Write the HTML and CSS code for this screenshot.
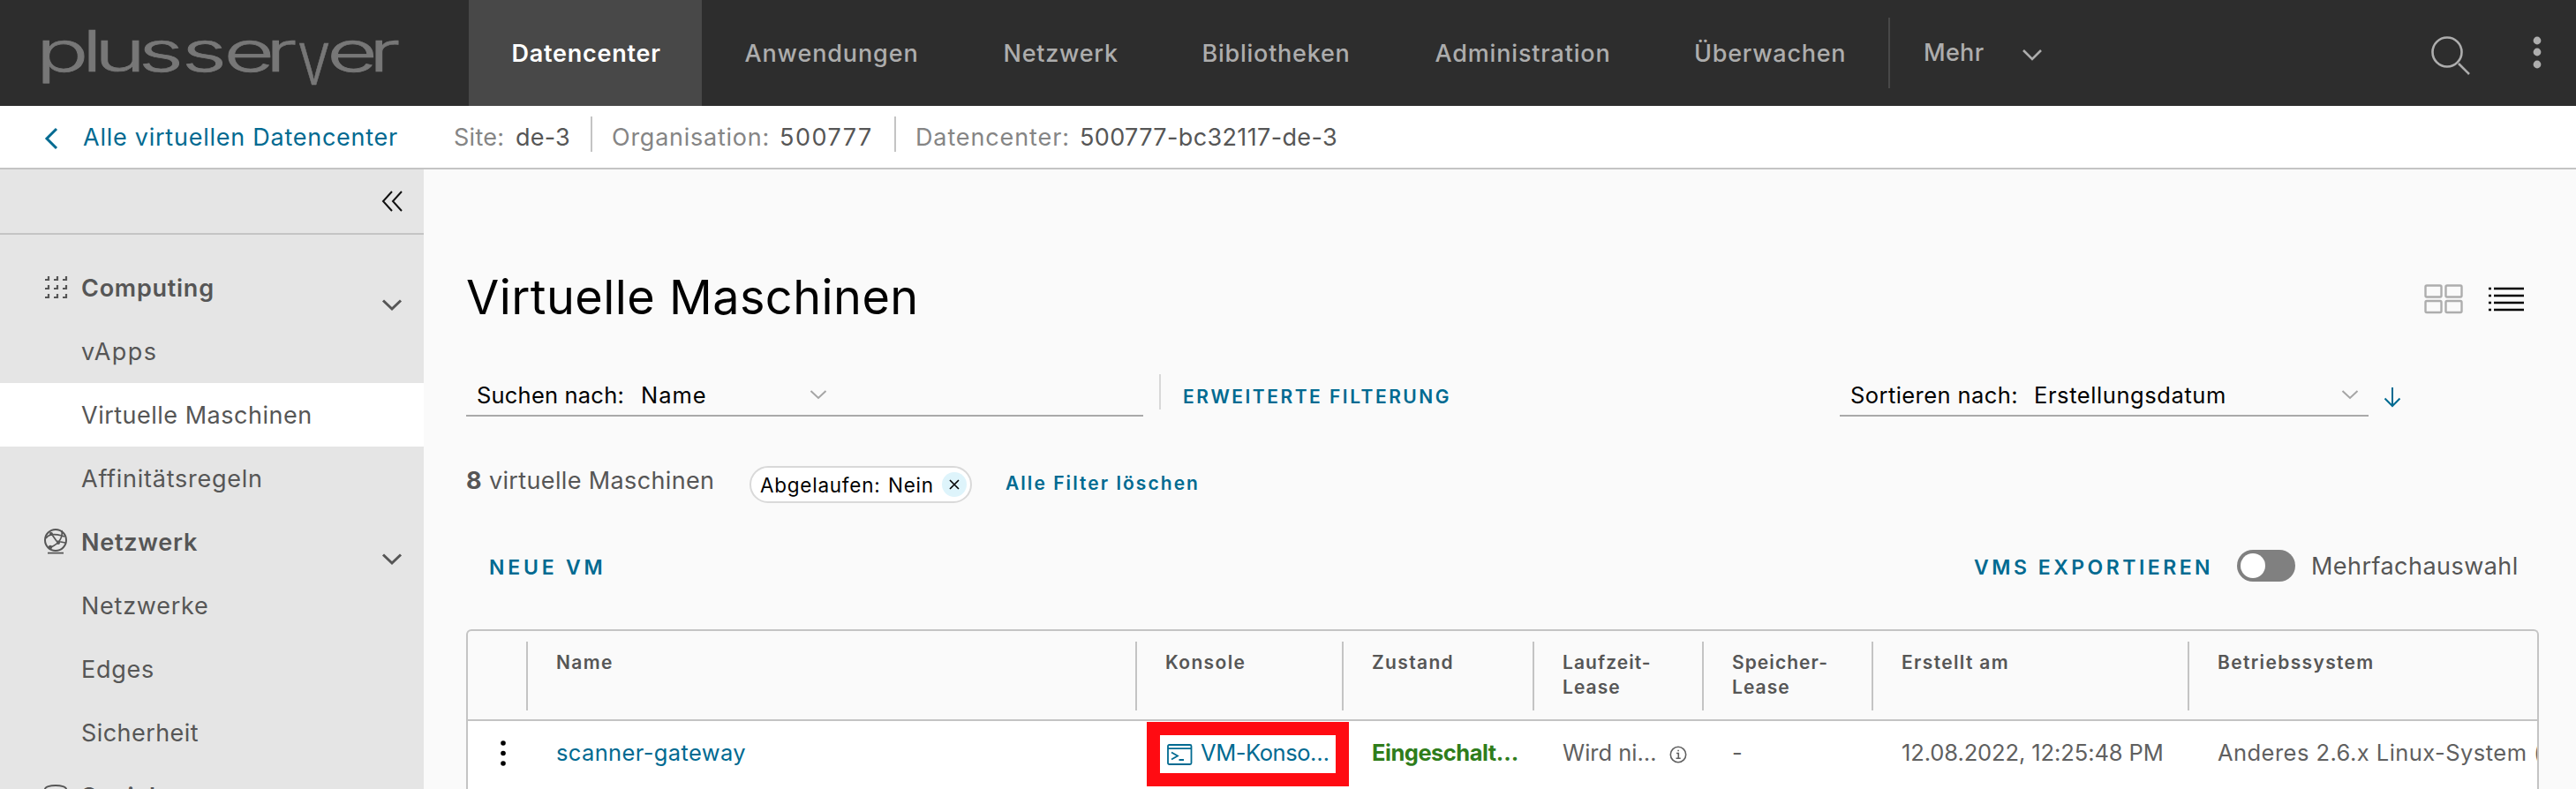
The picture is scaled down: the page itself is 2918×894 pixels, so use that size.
FILE: index.html
```html
<!DOCTYPE html>
<html lang="de">
<head>
<meta charset="utf-8">
<title>Virtuelle Maschinen</title>
<link rel="stylesheet" href="styles.css">
</head>
<body>
<header class="topbar">
  <svg class="logo" width="531" height="120" viewBox="0 0 531 120" aria-label="plusserver">
    <g class="logo-wide" transform="scale(1.55 1)">
      <text y="81" x="26.3 59.8 68.9 101.2 132.8 163.500 194">plusser</text>
      <text y="81" x="238.900 269.500">er</text>
    </g>
    <g transform="scale(.78 1)"><text class="logo-v" y="96" x="432">v</text></g>
  </svg>
  <nav class="nav">
    <a class="nav-item nav-active w-dc">Datencenter</a>
    <a class="nav-item w-app">Anwendungen</a>
    <a class="nav-item w-net">Netzwerk</a>
    <a class="nav-item w-lib">Bibliotheken</a>
    <a class="nav-item w-adm">Administration</a>
    <a class="nav-item w-mon">Überwachen</a>
    <a class="nav-more">Mehr
      <svg width="24" height="14" viewBox="0 0 24 14"><path d="M2 2l10 10L22 2"/></svg>
    </a>
  </nav>
  <div class="top-actions">
    <svg class="search" width="46" height="46" viewBox="0 0 46 46"><circle cx="19" cy="19" r="16.5"/><path d="M32 32l12 12"/></svg>
    <svg class="dots" width="12" height="40" viewBox="0 0 12 40"><circle cx="6" cy="6" r="4.4"/><circle cx="6" cy="19" r="4.4"/><circle cx="6" cy="33" r="4.4"/></svg>
  </div>
</header>

<div class="crumbs">
  <svg class="back" width="16" height="26" viewBox="0 0 16 26"><path d="M14 2L3 13l11 11"/></svg>
  <a class="crumb-link">Alle virtuellen Datencenter</a>
  <div class="crumb c-site"><span class="k k-site">Site:</span><span class="v v-site">de-3</span></div>
  <div class="crumb c-org"><span class="k k-org">Organisation:</span><span class="v v-org">500777</span></div>
  <div class="crumb c-dc"><span class="k k-dc">Datencenter:</span><span class="v v-dc">500777-bc32117-de-3</span></div>
</div>

<div class="body">
  <aside class="side">
    <div class="side-head">
      <svg width="24" height="24" viewBox="0 0 24 24"><path d="M12 1L2 12l10 11M23 1L13 12l10 11"/></svg>
    </div>
    <div class="side-list">
      <div class="group">
        <svg class="gicon" width="28" height="32" viewBox="0 0 28 32"><path d="M1 7h4V3M11 7h4V3M21 7h4V3M1 17h4v-4M11 17h4v-4M21 17h4v-4M1 27h4v-4M11 27h4v-4M21 27h4v-4" stroke-width="2.2"/></svg>
        <span>Computing</span>
        <svg class="chev" width="24" height="15" viewBox="0 0 24 15"><path d="M2 2.500l10 9.500L22 2.500"/></svg>
      </div>
      <a class="item i-vapps">vApps</a>
      <a class="item sel">Virtuelle Maschinen</a>
      <a class="item i-aff">Affinitätsregeln</a>
      <div class="group">
        <svg class="gicon" width="28" height="32" viewBox="0 0 28 32"><circle cx="13" cy="14" r="12"/><path d="M4 28.700h18M2 12q4-7 18-3l3 1M7 5l7 10 10 2M20 3q2 12-12 19" stroke-width="1.700"/><circle cx="8" cy="7" r="2" class="dot"/><circle cx="16" cy="17" r="2" class="dot"/><circle cx="7" cy="22" r="2.200" class="dot"/></svg>
        <span>Netzwerk</span>
        <svg class="chev" width="24" height="15" viewBox="0 0 24 15"><path d="M2 2.500l10 9.500L22 2.500"/></svg>
      </div>
      <a class="item">Netzwerke</a>
      <a class="item">Edges</a>
      <a class="item i-sec">Sicherheit</a>
      <div class="group">
        <svg class="gicon gstore" width="28" height="32" viewBox="0 0 28 32"><ellipse cx="13" cy="5" rx="12" ry="4"/><path d="M1 5v20c0 5 24 5 24 0V5"/></svg>
        <span>Speicher</span>
      </div>
    </div>
  </aside>

  <main class="main">
    <div class="title-row">
      <h1>Virtuelle Maschinen</h1>
      <div class="views">
        <svg class="grid-ic" width="44" height="34" viewBox="0 0 44 34"><rect x="1.500" y="1.500" width="18" height="13" rx="1.500"/><rect x="24.500" y="1.500" width="18" height="13" rx="1.500"/><rect x="1.500" y="19" width="18" height="13" rx="1.500"/><rect x="24.500" y="19" width="18" height="13" rx="1.500"/></svg>
        <svg class="list-ic" width="42" height="30" viewBox="0 0 42 30"><path d="M7 3h34M7 11h34M7 19h34M7 27h34M1 3h3M1 11h3M1 19h3M1 27h3"/></svg>
      </div>
    </div>

    <div class="search-row">
      <div class="field f-search"><span class="lab lab-s">Suchen nach:</span><span class="val val-s">Name</span><svg class="caret" width="20" height="12" viewBox="0 0 20 12"><path d="M1.500 2l8.500 8 8.500-8"/></svg></div>
      <div class="vline"></div>
      <a class="adv">ERWEITERTE FILTERUNG</a>
      <div class="field f-sort"><span class="lab lab-o">Sortieren nach:</span><span class="val val-o">Erstellungsdatum</span><svg class="caret" width="20" height="12" viewBox="0 0 20 12"><path d="M1.500 2l8.500 8 8.500-8"/></svg></div>
      <svg class="arrow" width="20" height="24" viewBox="0 0 20 24"><path d="M10 1v21M1.500 13.500L10 22l8.500-8.500"/></svg>
    </div>

    <div class="filter-row">
      <div class="count"><b>8</b> virtuelle Maschinen</div>
      <div class="pill"><span class="pk">Abgelaufen:</span><span class="pv">Nein</span><span class="px"><svg width="12" height="12" viewBox="0 0 12 12"><path d="M1 1l10 10M11 1L1 11"/></svg></span></div>
      <a class="clear">Alle Filter löschen</a>
    </div>

    <div class="action-row">
      <a class="act act-new">NEUE VM</a>
      <a class="act act-exp">VMS EXPORTIEREN</a>
      <div class="toggle"><i></i></div>
      <span class="multi">Mehrfachauswahl</span>
    </div>

    <section class="table">
      <div class="row thead">
        <div class="th th-first"></div>
        <div class="th">Name</div>
        <div class="th">Konsole</div>
        <div class="th">Zustand</div>
        <div class="th th-lease">Laufzeit-<br>Lease</div>
        <div class="th th-lease">Speicher-<br>Lease</div>
        <div class="th">Erstellt am</div>
        <div class="th">Betriebssystem</div>
      </div>
      <div class="row trow">
        <div class="td td-menu"><svg width="8" height="32" viewBox="0 0 8 32"><circle cx="4" cy="5" r="2.800"/><circle cx="4" cy="16.500" r="2.800"/><circle cx="4" cy="28" r="2.800"/></svg></div>
        <div class="td link t-name">scanner-gateway</div>
        <div class="td link t-con">
          <svg class="term" width="29" height="24" viewBox="0 0 29 24"><rect x="1" y="1" width="26.500" height="22" rx="1.500"/><path d="M1 5.200h26.500M5 9.500l7 4-7 4M13.500 18h5.500"/></svg>
          <span>VM-Konso…</span>
          <div class="mark"></div>
        </div>
        <div class="td t-on">Eingeschalt…</div>
        <div class="td t-run"><span>Wird ni…</span><svg width="20" height="20" viewBox="0 0 20 20"><circle cx="10" cy="10" r="8.700"/><path d="M8 8.500h2.300V14M7.500 14.200h5.200M9.300 5.500h1.600"/></svg></div>
        <div class="td">-</div>
        <div class="td t-date">12.08.2022, 12:25:48 PM</div>
        <div class="td t-os">Anderes 2.6.x Linux-System (</div>
      </div>
    </section>
  </main>
</div>
</body>
</html>
```
FILE: styles.css
```css
* { box-sizing: border-box; }
html { overflow: hidden; }
body {
  margin: 0;
  height: 894px;
  overflow: hidden;
  background: #fafafa;
  color: #565656;
  font-family: Inter, "Liberation Sans", sans-serif;
  font-size: 27px;
  letter-spacing: .75px;
  white-space: nowrap;
}
svg { display: block; flex: none; fill: none; stroke: currentColor; }

/* top bar */
.topbar { display: flex; height: 120px; background: #2d2d2d; color: #adadad; }
.logo { color: #777; fill: #777; stroke: #777; stroke-width: .7; font-weight: 300; letter-spacing: 0; }
.logo-wide text { font-size: 64px; }
.logo-v { font-size: 86px; }
.nav { display: flex; font-weight: 500; line-height: 122px; }
.nav-item { flex: none; height: 120px; padding-left: 48.5px; }
.nav-active { background: #484848; color: #fff; font-weight: 600; }
.w-dc { width: 264px; }
.w-app { width: 293px; letter-spacing: .87px; }
.w-net { width: 225px; }
.w-lib { width: 264px; }
.w-adm { width: 295px; letter-spacing: .83px; }
.w-mon { width: 267px; padding-left: 47px; }
.nav-more {
  display: flex; align-items: center; gap: 43px;
  height: 80px; margin-top: 20px; padding-left: 38px;
  border-left: 2px solid #484848; line-height: 82px; letter-spacing: .3px;
}
.nav-more svg { stroke-width: 2.6; margin-top: 3px; }
.top-actions { display: flex; margin-left: auto; padding-right: 38px; }
.search { margin: 40px 69px 0 0; stroke-width: 2.6; }
.dots { margin-top: 40px; fill: currentColor; stroke: none; }

/* breadcrumb bar */
.crumbs {
  display: flex; align-items: center;
  height: 72px; padding: 0 0 2px 50px;
  background: #fff; border-bottom: 2px solid #c4c4c4;
}
.back { color: #006a91; stroke-width: 3; margin-top: 5px; }
.crumb-link { width: 420px; margin: 3px 0 0 28px; color: #006a91; }
.crumb { display: flex; height: 40px; line-height: 48px; margin-top: -4px; }
.crumb + .crumb { border-left: 2px solid #c4c4c4; }
.c-site { width: 155px; }
.c-org { width: 344px; padding-left: 22px; }
.c-dc { padding-left: 22px; }
.k { color: #858585; }
.k-site { width: 70px; letter-spacing: .3px; }
.v-site { letter-spacing: .2px; }
.k-org { width: 190px; }
.v-org { letter-spacing: 1.5px; }
.k-dc { width: 186px; letter-spacing: .88px; }
.v-dc { letter-spacing: .36px; }

/* sidebar */
.body { display: flex; height: 702px; overflow: hidden; }
.side { flex: none; width: 480px; background: #e5e5e5; overflow: hidden; }
.side-head {
  display: flex; justify-content: flex-end; align-items: center;
  height: 74px; padding-right: 24px;
  border-bottom: 2px solid #c4c4c4; color: #111;
}
.side-head svg { stroke-width: 2; }
.side-list { padding-top: 24px; }
.group { display: flex; height: 72px; line-height: 74px; padding-left: 50px; font-weight: 600; }
.group span { margin-left: 14px; }
.gicon { margin-top: 20px; stroke-width: 2; }
.gstore { margin-top: 23px; }
.dot { fill: currentColor; stroke: none; }
.chev { margin: 48px 24px 0 auto; stroke-width: 3; }
.item { display: block; height: 72px; line-height: 74px; padding-left: 92px; }
.i-vapps { letter-spacing: 1.4px; }
.sel { background: #fff; letter-spacing: .5px; }
.i-sec { letter-spacing: .43px; }

/* content */
.main { flex: 1; min-width: 0; padding: 108px 42px 0 48px; }
.title-row { display: flex; justify-content: space-between; height: 72px; }
h1 { margin: 0; font-size: 54px; font-weight: 400; line-height: 73px; letter-spacing: .45px; color: #000; }
.views { display: flex; gap: 28px; padding: 22px 16px 0 0; }
.grid-ic { color: #adadad; stroke-width: 2.4; }
.list-ic { color: #000; stroke-width: 2.6; margin-top: 2px; }

.search-row { display: flex; height: 48px; margin-top: 52px; font-size: 25.5px; line-height: 48px; color: #000; }
.field { display: flex; flex: none; height: 48px; border-bottom: 2px solid #a9a9a9; padding-left: 12px; }
.f-search { width: 767px; }
.lab-s { width: 186px; letter-spacing: .2px; }
.val-s { width: 191px; letter-spacing: 1px; }
.caret { color: #a5a5a5; margin-top: 17px; stroke-width: 2; }
.vline { width: 2px; height: 40px; margin-left: 18px; background: #d8d8d8; }
.adv, .clear, .act { color: #006a91; font-weight: 600; }
.adv { width: 744px; margin-left: 25px; font-size: 21px; line-height: 51px; letter-spacing: 2.5px; }
.f-sort { width: 599px; }
.lab-o { width: 208px; letter-spacing: .42px; }
.val-o { width: 348px; letter-spacing: .58px; }
.arrow { color: #006a91; margin: 14px 0 0 17px; stroke-width: 2; }

.filter-row { display: flex; margin-top: 56px; height: 42px; }
.count { width: 321px; line-height: 34px; letter-spacing: .36px; }
.pill {
  display: flex; align-items: center; width: 252px; height: 42px; padding-left: 10px;
  border: 2px solid #d9d9d9; border-radius: 21px; background: #fff; color: #000; font-size: 22.5px;
}
.pk { width: 145px; }
.pv { width: 61px; }
.px { display: flex; width: 28px; height: 28px; align-items: center; justify-content: center; border-radius: 50%; background: #def4fb; }
.px svg { stroke-width: 1.6; }
.clear { margin-left: 38px; font-size: 21px; line-height: 39px; letter-spacing: 2.05px; }

.action-row { display: flex; height: 36px; margin-top: 53px; line-height: 40px; }
.act { font-size: 23px; }
.act-new { width: 1680px; padding-left: 26px; letter-spacing: 3.8px; }
.act-exp { width: 298px; margin-left: 28px; letter-spacing: 3.5px; }
.toggle { flex: none; width: 66px; height: 36px; padding: 4px; border-radius: 18px; background: #808080; }
.toggle i { display: block; width: 28px; height: 28px; border-radius: 50%; background: #fff; }
.multi { margin-left: 18px; line-height: 37px; letter-spacing: .45px; }

/* grid */
.table { height: 181px; margin-top: 54px; border: 2px solid #c4c4c4; border-bottom: 0; border-radius: 6px 6px 0 0; overflow: hidden; }
.row { display: grid; grid-template-columns: 66px 690px 234px 216px 192px 192px 358px 1fr; }
.thead { height: 102px; border-bottom: 2px solid #c4c4c4; }
.th {
  height: 78px; margin-top: 12px; padding: 10px 0 0 32px;
  border-left: 2px solid #c4c4c4; font-size: 21px; font-weight: 600; line-height: 28px; letter-spacing: 1.35px;
}
.th-lease { letter-spacing: 1.05px; }
.th-first { border-left: 0; }
.trow { height: 77px; background: #fff; color: #606060; font-size: 25.5px; line-height: 72px; letter-spacing: .36px; }
.td { padding-left: 34px; min-width: 0; }
.link { color: #006a91; }
.td-menu { padding: 20px 0 0 36px; color: #000; }
.td-menu svg { fill: currentColor; stroke: none; }
.t-con { position: relative; display: flex; padding-left: 36px; letter-spacing: -.45px; }
.term { margin: 26px 9px 0 0; stroke-width: 1.8; }
.mark { position: absolute; left: 13px; top: 1px; width: 229px; height: 73px; border: 15px solid #ff0b12; }
.t-on { color: #2f7d1b; font-weight: 700; letter-spacing: -.5px; }
.t-run { display: flex; letter-spacing: 0; }
.t-run svg { margin: 28px 0 0 14px; stroke-width: 1.6; }
.t-date { letter-spacing: -.1px; }
.t-os { overflow: hidden; letter-spacing: .45px; }
```
